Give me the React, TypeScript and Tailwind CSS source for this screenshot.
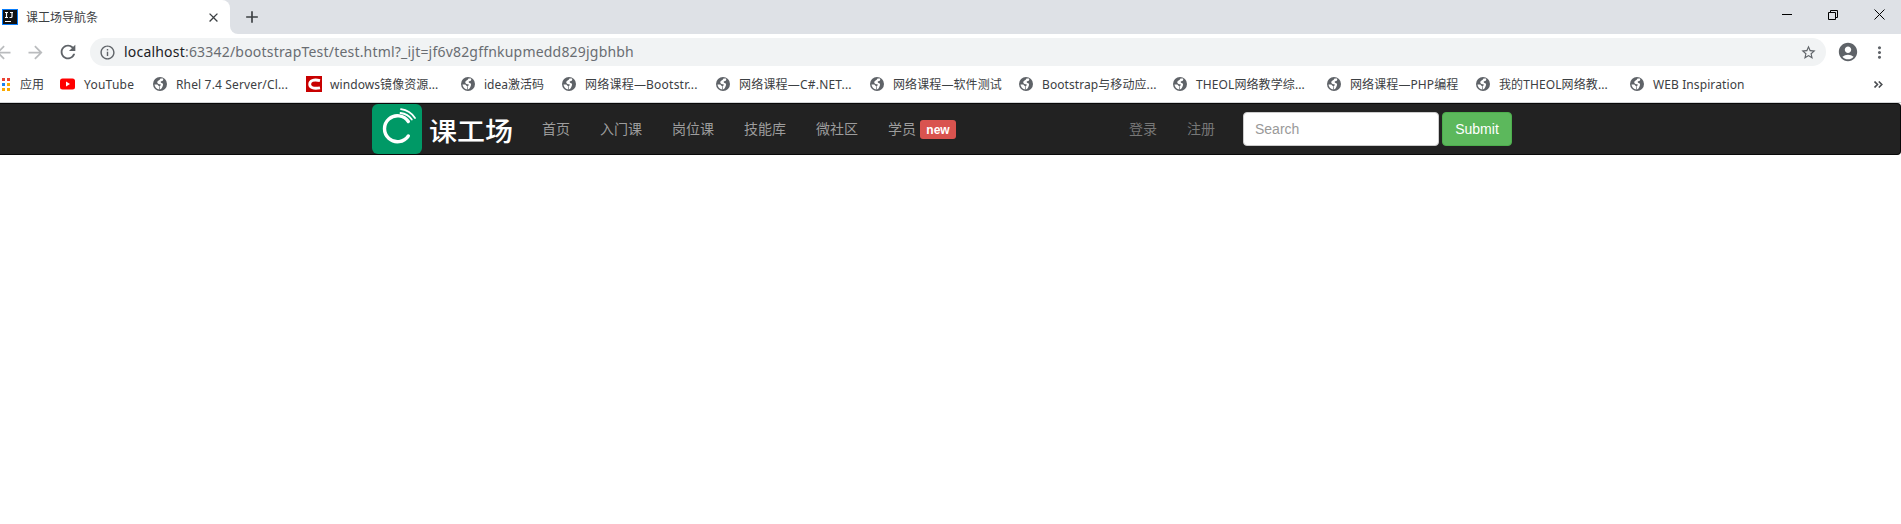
import { MdArrowBack, MdArrowForward, MdRefresh, MdInfoOutline, MdStarBorder, MdAccountCircle, MdMoreVert, MdClose, MdAdd } from "react-icons/md";

const ui = "font-['Noto_Sans','Noto_Sans_CJK_SC',sans-serif]";

function Globe() {
  return (
    <svg viewBox="0 0 14 14" className="h-[14px] w-[14px] shrink-0">
      <circle cx="7" cy="7" r="7" fill="#5f6368" />
      <path d="M7.500 1.500H10C10.800 3.200 9.800 4 8.200 4.200C7.500 4.300 7.400 5.600 8.500 5.900C10 6 10.500 7.200 9.800 8.800C9.200 10.500 8.500 12.200 6.800 12.500C7.200 11 6.500 10.500 6.500 9.300C7 8.800 8 8.600 7.800 7.500C6.500 7.300 4.200 7.200 4.200 5.300C4.300 3.500 6.800 3.400 7.500 1.500Z" fill="#fff" />
      <path d="M1.500 7.400H4.300L6 9.200L6.300 12.400C3.800 12.200 1.700 10 1.500 7.400Z" fill="#fff" />
    </svg>
  );
}

function YouTube() {
  return (
    <svg viewBox="0 0 15 12" className="h-3 w-[15px] shrink-0">
      <rect y=".5" width="15" height="11" rx="2.500" fill="#f00" />
      <path d="M6 3.600v4.800L10 6z" fill="#fff" />
    </svg>
  );
}

function RedC() {
  return (
    <svg viewBox="0 0 16 16" className="h-4 w-4 shrink-0">
      <rect width="16" height="16" fill="#c80000" />
      <path d="M14 4.600C7.500 3 3.700 4.800 3.700 8.200S7.500 13 14 11.800" fill="none" stroke="#fff" strokeWidth="2.800" />
    </svg>
  );
}

function Apps() {
  const colors = ["#ea4335", "#ea4335", "#1a84f0", "#fbaa00", "#fbaa00", "#fbaa00"];
  return (
    <svg viewBox="0 0 8 13" className="h-[13px] w-2 shrink-0">
      {colors.map((c, i) => (
        <rect key={i} x={(i % 2) * 5} y={Math.floor(i / 2) * 5} width="3" height="3" fill={c} />
      ))}
    </svg>
  );
}

const bookmarks = [
  { label: "应用", icon: <Apps />, cls: "w-[58px] gap-[10px]" },
  { label: "YouTube", icon: <YouTube />, cls: "w-[93px] gap-[9px] tracking-[0.25px]" },
  { label: "Rhel 7.4 Server/Cl...", icon: <Globe />, cls: "w-[153px] gap-[9px] tracking-[0.15px]" },
  { label: "windows镜像资源...", icon: <RedC />, cls: "w-[155px] gap-2 tracking-[0.08px]" },
  { label: "idea激活码", icon: <Globe />, cls: "w-[101px] gap-[9px]" },
  { label: "网络课程—Bootstr...", icon: <Globe />, cls: "w-[154px] gap-[9px] tracking-[0.22px]" },
  { label: "网络课程—C#.NET...", icon: <Globe />, cls: "w-[154px] gap-[9px] tracking-[0.2px]" },
  { label: "网络课程—软件测试", icon: <Globe />, cls: "w-[149px] gap-[9px] tracking-[0.1px]" },
  { label: "Bootstrap与移动应...", icon: <Globe />, cls: "w-[154px] gap-[9px] tracking-[0.08px]" },
  { label: "THEOL网络教学综...", icon: <Globe />, cls: "w-[154px] gap-[9px] tracking-[0.1px]" },
  { label: "网络课程—PHP编程", icon: <Globe />, cls: "w-[149px] gap-[9px] tracking-[0.1px]" },
  { label: "我的THEOL网络教...", icon: <Globe />, cls: "w-[154px] gap-[9px] tracking-[0.1px]" },
  { label: "WEB Inspiration", icon: <Globe />, cls: "w-[244px] gap-[9px] tracking-[0.1px]" },
];

function TabStrip() {
  return (
    <div className="flex h-[34px] bg-[#dee1e6]">
      <div className="flex w-[230px] items-center rounded-tr-lg bg-white pl-[2px] pr-[9px]">
        <svg viewBox="0 0 16 16" className="h-4 w-4">
          <rect width="16" height="16" fill="#087cfa" />
          <rect x="1" y="1" width="14" height="14" fill="#111" />
          <path d="M3 3.500h3M4.500 3.500v5M3 8.500h3M8 3.500h3M10 3.500v4q0 1-1 1H7.500M3 12.500h6" fill="none" stroke="#fff" strokeWidth="1.200" />
        </svg>
        <span className="ml-2 mt-px text-xs text-[#3c4043]">课工场导航条</span>
        <MdClose className="ml-auto h-[15px] w-[15px] text-[#3c4043]" />
      </div>
      <div className="w-2 bg-white"><div className="h-full rounded-bl-lg bg-[#dee1e6]" /></div>
      <MdAdd className="ml-1 mt-[7px] h-5 w-5 text-[#3c4043]" />
      <svg viewBox="0 0 103 12" className="ml-auto mr-4 mt-2 h-3 w-[103px]" fill="none" stroke="#000">
        <path d="M0 6.500h10M46.500 4.500h7v7h-7zM48.500 4.500v-2h7v7h-2M92.500 1.500l10 10M102.500 1.500l-10 10" />
      </svg>
    </div>
  );
}

function Toolbar() {
  return (
    <div className="flex h-9 items-center bg-white">
      <MdArrowBack className="-ml-[7px] h-[21px] w-[21px] text-[#babcbe]" />
      <MdArrowForward className="ml-[11px] h-[21px] w-[21px] text-[#babcbe]" />
      <MdRefresh className="ml-[11px] h-[22px] w-[22px] text-[#5f6368]" />
      <div className="ml-[11px] flex h-7 w-[1736px] items-center rounded-full bg-[#f1f3f4] pl-[9px] pr-[9px]">
        <MdInfoOutline className="h-[17px] w-[17px] text-[#5f6368]" />
        <span className="ml-2 whitespace-nowrap text-sm tracking-[0.2px] text-[#696d72]">
          <span className="text-[#202124]">localhost</span>:63342/bootstrapTest/test.html?_ijt=jf6v82gffnkupmedd829jgbhbh
        </span>
        <MdStarBorder className="ml-auto h-[17px] w-[17px] text-[#5f6368]" />
      </div>
      <MdAccountCircle className="ml-[11px] h-[22px] w-[22px] text-[#5f6368]" />
      <MdMoreVert className="ml-[11px] h-[19px] w-[19px] text-[#5f6368]" />
    </div>
  );
}

function Bookmarks() {
  return (
    <div className="flex h-[33px] items-center border-b border-[#d3d5d7] bg-white pb-[5px] pl-[2px] pt-px text-xs text-[#3c4043]">
      {bookmarks.map((b) => (
        <div key={b.label} className={`flex shrink-0 items-center whitespace-nowrap ${b.cls}`}>
          {b.icon}
          <span className="mt-px">{b.label}</span>
        </div>
      ))}
      <svg viewBox="0 0 9 7" className="h-[7px] w-[9px]" fill="none" stroke="#4a4d51" strokeWidth="1.600">
        <path d="M.5.5l3 3-3 3M4.800.5l3 3-3 3" />
      </svg>
    </div>
  );
}

function Navbar() {
  return (
    <nav className="flex h-[52px] items-center rounded-r border-y border-r border-[#080808] bg-[#222] pl-[372px] font-['Liberation_Sans','Noto_Sans_CJK_SC',sans-serif] text-sm text-[#9d9d9d]">
      <svg viewBox="0 0 50 50" className="h-[50px] w-[50px]" fill="none" stroke="#fff" strokeLinecap="round">
        <rect width="50" height="50" rx="6" fill="#009966" stroke="none" />
        <path d="M36.300 17.500A13 13 0 1 0 36.300 32" strokeWidth="3.400" />
        <path d="M29 5.200Q38 6.500 43 14M28.500 9Q36 10 39.800 15.500" strokeWidth="1.800" />
      </svg>
      <span className="ml-[7px] mt-[6px] w-[98px] origin-left scale-y-95 whitespace-nowrap text-[28px] font-medium leading-none text-white">课工场</span>
      <ul className="flex items-center">
        {["首页", "入门课", "岗位课", "技能库", "微社区"].map((t) => (
          <li key={t} className="px-[15px]">{t}</li>
        ))}
        <li className="flex items-center gap-1 pl-[15px]">
          学员
          <span className="mt-px flex h-[19px] w-9 items-center justify-center rounded-[3px] bg-[#d9534f] text-xs font-bold text-white">new</span>
        </li>
      </ul>
      <div className="ml-[173px] flex w-[114px] gap-[30px] text-[#777]"><span>登录</span><span>注册</span></div>
      <input placeholder="Search" className="h-[34px] w-[196px] rounded border border-[#ccc] bg-white px-[11px] placeholder:text-[#999]" />
      <button className="ml-[3px] h-[34px] w-[70px] rounded border border-[#4cae4c] bg-[#5cb85c] text-white">Submit</button>
    </nav>
  );
}

export default function App() {
  return (
    <div className={`h-[524px] w-[1901px] overflow-hidden bg-white ${ui}`}>
      <TabStrip />
      <Toolbar />
      <Bookmarks />
      <Navbar />
    </div>
  );
}
